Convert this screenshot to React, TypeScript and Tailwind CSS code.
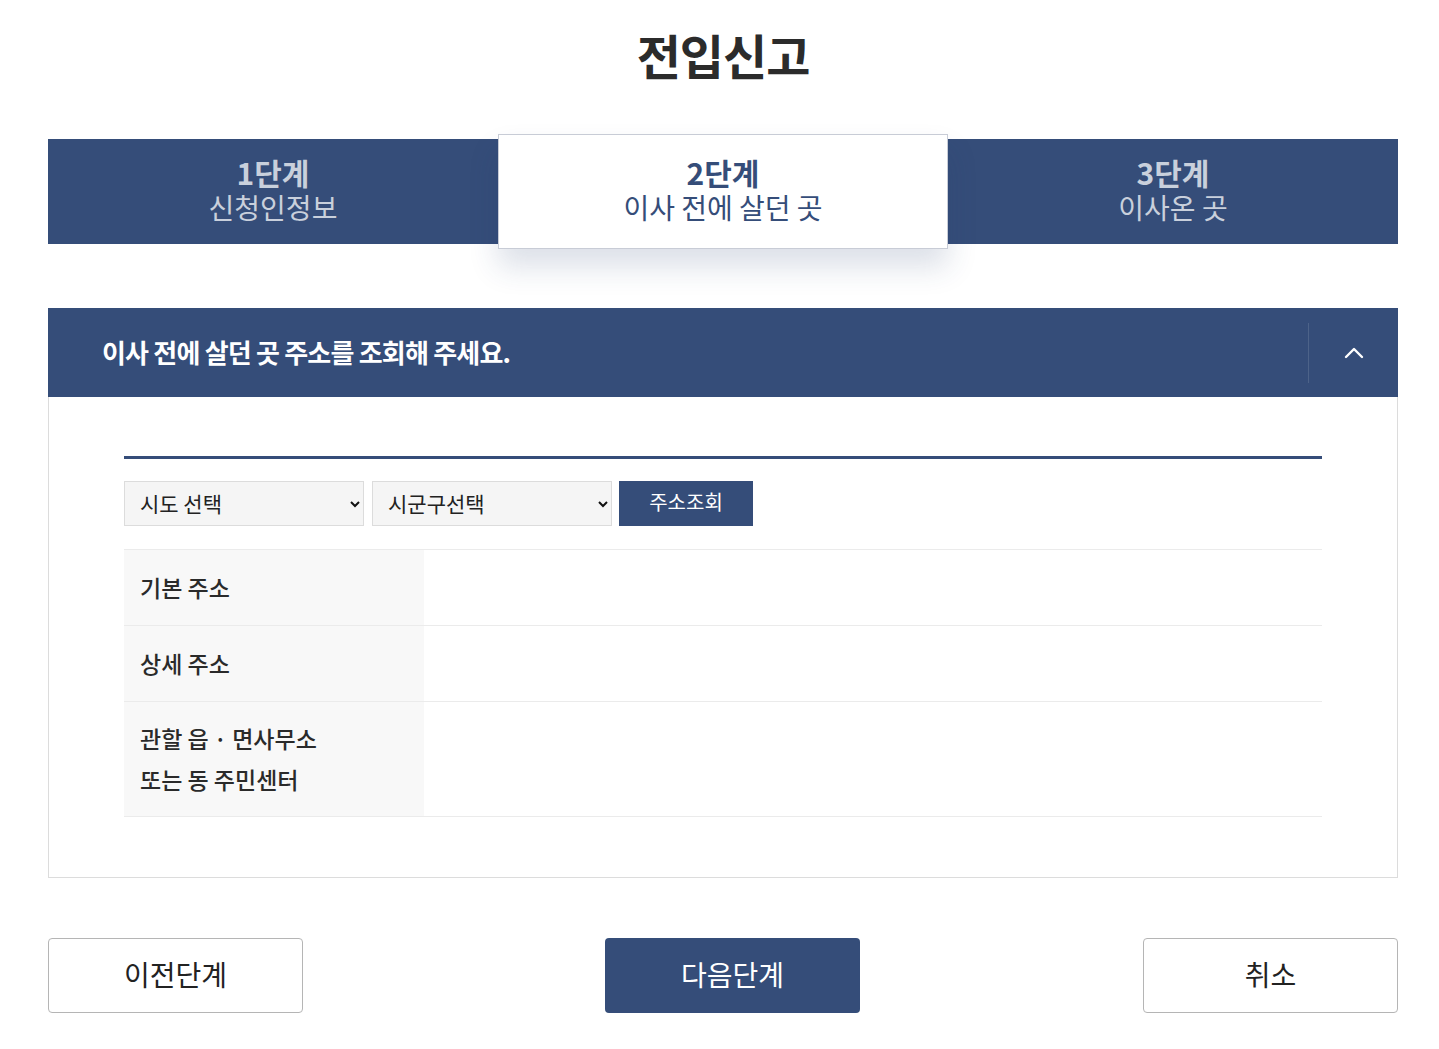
import { ChevronUp } from 'lucide-react'

const font = { fontFamily: '"Noto Sans CJK KR", "Noto Sans", sans-serif' }

const steps = [
    { no: '1단계', label: '신청인정보' },
    { no: '2단계', label: '이사 전에 살던 곳' },
    { no: '3단계', label: '이사온 곳' },
]

const rows = [
    { label: ['기본 주소'], h: 'h-[76px]' },
    { label: ['상세 주소'], h: 'h-[76px]' },
    { label: ['관할 읍 · 면사무소', '또는 동 주민센터'], h: 'h-[115px]' },
]

function Select({ placeholder }: { placeholder: string }) {
    return (
        <div className="relative w-[240px] h-[45px]">
            <select
                defaultValue=""
                className="appearance-none w-full h-full border border-[#dcdcdc] bg-[#f5f5f5] pl-[15px] text-[21px] text-[#222] outline-none"
            >
                <option value="">{placeholder}</option>
            </select>
            <svg
                className="absolute right-[3px] top-1/2 -translate-y-1/2 pointer-events-none"
                width="12"
                height="12"
                viewBox="0 0 12 12"
            >
                <path d="M2 4l4 4 4-4" fill="none" stroke="#111" strokeWidth="2" />
            </svg>
        </div>
    )
}

export default function App() {
    return (
        <div className="min-h-[1049px] bg-white pl-[48px] pt-[22px]" style={font}>
            <div className="w-[1350px]">
                {/* Title */}
                <h1 className="text-center text-[48px] font-bold text-[#2b2b2b] leading-[64px] tracking-[-1px]">
                    전입신고
                </h1>

                {/* Steps */}
                <div className="mt-[53px] flex h-[105px] bg-[#354d79]">
                    {steps.map((s, i) =>
                        i === 1 ? (
                            <div
                                key={s.no}
                                className="relative z-10 -my-[5px] flex w-[450px] flex-col items-center justify-center border border-[#c8ccd6] bg-white pb-[4px] text-[#354d79] shadow-[0_18px_28px_rgba(40,60,110,0.16)]"
                            >
                                <div className="text-[30px] font-bold leading-[35px]">{s.no}</div>
                                <div className="text-[28px] leading-[35px]">{s.label}</div>
                            </div>
                        ) : (
                            <div
                                key={s.no}
                                className="flex flex-1 flex-col items-center justify-center pb-[4px] text-[#c9d0dc]"
                            >
                                <div className="text-[30px] font-bold leading-[35px]">{s.no}</div>
                                <div className="text-[28px] leading-[35px]">{s.label}</div>
                            </div>
                        )
                    )}
                </div>

                {/* Section */}
                <div className="mt-[64px]">
                    <div className="flex h-[89px] items-center bg-[#354d79]">
                        <div className="flex-1 pl-[54px] pb-[2px] text-[26px] font-bold tracking-[-0.8px] text-white">
                            이사 전에 살던 곳 주소를 조회해 주세요.
                        </div>
                        <div className="h-[60px] w-px bg-[#4d6389]" />
                        <div className="flex w-[89px] items-center justify-center">
                            <ChevronUp size={32} strokeWidth={1.8} className="text-white" />
                        </div>
                    </div>

                    <div className="border border-t-0 border-[#dcdcdc] px-[75px] pt-[59px] pb-[60px]">
                        <div className="h-[3px] bg-[#354d79]" />

                        <div className="mt-[22px] flex gap-[8px]">
                            <Select placeholder="시도 선택" />
                            <Select placeholder="시군구선택" />
                            <button className="-ml-px h-[45px] w-[134px] bg-[#354d79] pb-[4px] text-[20px] text-white">
                                주소조회
                            </button>
                        </div>

                        <div className="mt-[23px] border-t border-[#ebebeb]">
                            {rows.map((r) => (
                                <div key={r.label[0]} className={`flex border-b border-[#ebebeb] ${r.h}`}>
                                    <div className="flex w-[300px] flex-col justify-center bg-[#f8f8f8] pl-[16px] text-[23px] font-medium leading-[41px] text-[#2a2a2a]">
                                        {r.label.map((l) => (
                                            <div key={l}>{l}</div>
                                        ))}
                                    </div>
                                    <div className="flex-1" />
                                </div>
                            ))}
                        </div>
                    </div>
                </div>

                {/* Buttons */}
                <div className="mt-[60px] flex items-center">
                    <button className="h-[75px] w-[255px] rounded-[4px] border border-[#b5b5b5] bg-white pb-[4px] text-[28px] text-[#222]">
                        이전단계
                    </button>
                    <button className="ml-[302px] h-[75px] w-[255px] rounded-[4px] bg-[#354d79] pb-[4px] text-[28px] text-white">
                        다음단계
                    </button>
                    <button className="ml-auto h-[75px] w-[255px] rounded-[4px] border border-[#b5b5b5] bg-white pb-[4px] text-[28px] text-[#222]">
                        취소
                    </button>
                </div>
            </div>
        </div>
    )
}
